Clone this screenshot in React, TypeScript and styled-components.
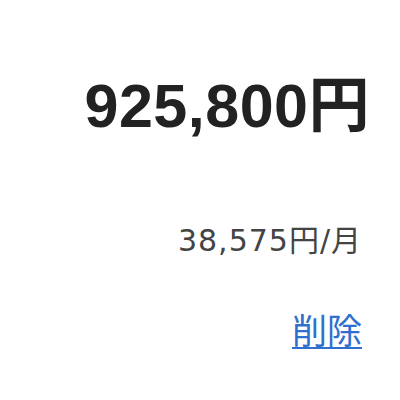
import React from 'react';
import styled, { createGlobalStyle } from 'styled-components';

const GlobalStyle = createGlobalStyle`
  html, body {
    margin: 0;
    padding: 0;
    background: #ffffff;
  }
  body {
    font-family: "Liberation Sans", "Noto Sans CJK JP", sans-serif;
  }
`;

const PriceCard = styled.div`
  display: flex;
  flex-direction: column;
  align-items: flex-end;
  width: 400px;
  height: 400px;
  box-sizing: border-box;
  padding: 76px 30px 0 0;
`;

const TotalPrice = styled.div`
  font-size: 61px;
  line-height: 61px;
  font-weight: 700;
  color: #222222;
  letter-spacing: 0.5px;
`;

const MonthlyPrice = styled.div`
  margin-top: 89px;
  margin-right: 8px;
  font-family: "DejaVu Sans", "Noto Sans CJK JP", sans-serif;
  font-size: 30px;
  line-height: 30px;
  color: #444444;
  letter-spacing: 1px;
`;

const DeleteLink = styled.a`
  margin-top: 55px;
  margin-right: 8px;
  font-family: "Noto Sans CJK JP", sans-serif;
  font-size: 35px;
  line-height: 35px;
  color: #2f6fd0;
  text-decoration: underline;
  text-underline-offset: 3px;
  text-decoration-thickness: 2px;
  cursor: pointer;
`;

export default function App() {
  return (
    <>
      <GlobalStyle />
      <PriceCard>
        <TotalPrice>925,800円</TotalPrice>
        <MonthlyPrice>38,575円/月</MonthlyPrice>
        <DeleteLink href="#">削除</DeleteLink>
      </PriceCard>
    </>
  );
}
